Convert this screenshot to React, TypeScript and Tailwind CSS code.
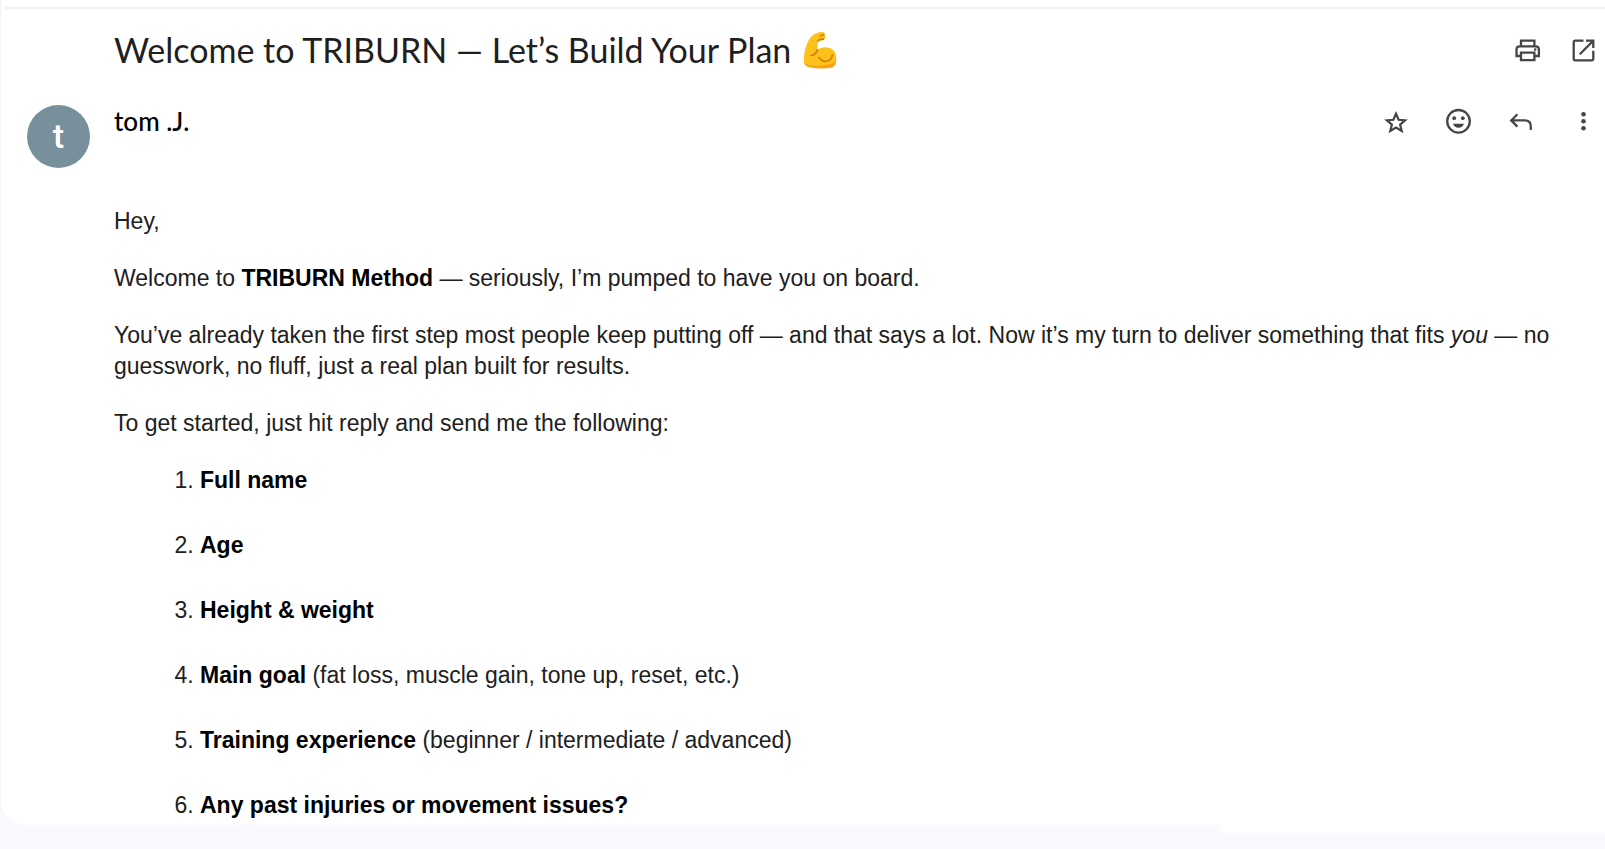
import React from "react";

type Question = { label: string; note?: string };

const questions: Question[] = [
  { label: "Full name" },
  { label: "Age" },
  { label: "Height & weight" },
  { label: "Main goal", note: "(fat loss, muscle gain, tone up, reset, etc.)" },
  { label: "Training experience", note: "(beginner / intermediate / advanced)" },
  { label: "Any past injuries or movement issues?" },
];

function IconButton({ label, children }: { label: string; children: React.ReactNode }) {
  return (
    <button type="button" aria-label={label} className="flex size-8 items-center justify-center rounded-full text-[#444746] hover:bg-gray-100">
      {children}
    </button>
  );
}

function PrintIcon() {
  return (
    <svg viewBox="0 0 32 32" className="size-8" fill="none" stroke="currentColor" strokeWidth="2.3">
      <path d="M9 12.300V6.700h13.400v5.600M9 22H4.500v-6.500q0-3.200 3.200-3.200h16q3.200 0 3.200 3.200V22h-4.500" />
      <path d="M9 18.600h13.400v7.600H9z" />
      <circle cx="23.200" cy="15.600" r="1.300" fill="currentColor" stroke="none" />
    </svg>
  );
}

function OpenIcon() {
  return (
    <svg viewBox="0 0 32 32" className="size-8" fill="none" stroke="currentColor" strokeWidth="2.3">
      <path d="M15.500 6.700H7.400q-1.700 0-1.700 1.700v16.200q0 1.700 1.700 1.700h16.200q1.700 0 1.700-1.700v-7.800" />
      <path d="M18 6.700h7.300V14M25 7L11.800 20.200" />
    </svg>
  );
}

function StarIcon() {
  return (
    <svg viewBox="0 0 32 32" className="size-8" fill="none" stroke="currentColor" strokeWidth="2.2">
      <path d="M17 8.800l2.600 6 6.500.5-5 4.300 1.600 6.400-5.700-3.400-5.700 3.400 1.600-6.400-5-4.300 6.500-.5z" />
    </svg>
  );
}

function SmileIcon() {
  return (
    <svg viewBox="0 0 32 32" className="size-8" fill="currentColor">
      <circle cx="16.500" cy="16.300" r="11.300" fill="none" stroke="currentColor" strokeWidth="2.300" />
      <circle cx="12.200" cy="13.200" r="1.900" />
      <circle cx="20.800" cy="13.200" r="1.900" />
      <path d="M11 18.800h11q-1.500 4-5.500 4t-5.500-4z" />
    </svg>
  );
}

function ReplyIcon() {
  return (
    <svg viewBox="0 0 32 32" className="size-8" fill="none" stroke="currentColor" strokeWidth="2.300">
      <path d="M12.400 9.200L6.200 15.400l6.200 6.200M6.200 15.400h13.600q6 0 6 6v3.500" />
    </svg>
  );
}

function MoreIcon() {
  return (
    <svg viewBox="0 0 32 32" className="size-8" fill="currentColor">
      <circle cx="15.500" cy="9.300" r="2.300" />
      <circle cx="15.500" cy="16.300" r="2.300" />
      <circle cx="15.500" cy="23.300" r="2.300" />
    </svg>
  );
}

function Biceps() {
  return (
    <svg viewBox="0 0 34 38" className="h-[38px] w-[34px] shrink-0" role="img" aria-label="Flexed biceps">
      <path d="M15 1.800Q19-.4 21.200 1.700l1.200 3q.5 3.400-2.600 4.500-2.400.9-4.600 1.300-1 4.600-.6 8.500 2.400-2.500 6.700-2.700 11.700.3 11.900 10.400.3 7.500-4.200 9.700-11 2.100-22.700-.2-5-1.200-5.500-5Q.5 15 8.400 5.300 11.500 2.500 15 1.800z" fill="#fcc21b" />
      <path d="M2 33q10 4 28-.4 2.500-1.600 3.100-5 .2 7-4.100 8.700-11 2.100-22.700-.2Q2.600 35.300 2 33z" fill="#f9a010" />
      <path d="M8 24.500q3.500.2 6.700-5.500M16 26.500q3.500 5 8.500 3.500 4.500-1.500 4.900-6.300M15 9.800q2-2.300 5.200-1.600M17 4.600q2.600.4 3.800-1.200" fill="none" stroke="#c8820e" strokeWidth="1.700" strokeLinecap="round" />
    </svg>
  );
}

export default function App() {
  return (
    <div className="flex min-h-screen flex-col bg-[#f8faff] font-['Liberation_Sans',Arial,sans-serif] text-[#202020]">
      <main className="rounded-bl-3xl border-l border-[#f4f5f8] bg-white pb-1">
        <div className="h-[7px]" />
        <div className="ml-1 h-0.5 bg-[#f1f1f2]" />
        <header className="flex items-center justify-between pt-4 pr-[5px] pl-[113px]">
          <h1 className="flex items-center gap-3 font-[Lato,sans-serif] text-[34px] leading-[50px] text-[#1f1f1f]">
            Welcome to TRIBURN — Let’s Build Your Plan
            <Biceps />
          </h1>
          <div className="flex gap-6">
            <IconButton label="Print all"><PrintIcon /></IconButton>
            <IconButton label="Open in new window"><OpenIcon /></IconButton>
          </div>
        </header>
        <section className="flex items-start pt-[30px] pr-[5px] pl-[26px]">
          <div className="flex size-[63px] shrink-0 items-center justify-center rounded-full bg-[#78909c] font-[Roboto,sans-serif] text-[34px] font-medium text-white">t</div>
          <div className="ml-6 flex grow items-center justify-between">
            <h2 className="font-[Lato,sans-serif] text-[26px] leading-8 font-medium text-black">tom .J.</h2>
            <div className="flex gap-[31px]">
              <IconButton label="Star"><StarIcon /></IconButton>
              <IconButton label="Add reaction"><SmileIcon /></IconButton>
              <IconButton label="Reply"><ReplyIcon /></IconButton>
              <IconButton label="More"><MoreIcon /></IconButton>
            </div>
          </div>
        </section>
        <article className="flex flex-col gap-[26px] pt-[38px] pr-10 pl-[113px] text-[23px] leading-[31px]">
          <p>Hey,</p>
          <p>Welcome to <strong className="text-black">TRIBURN Method</strong> — seriously, I’m pumped to have you on board.</p>
          <p>You’ve already taken the first step most people keep putting off — and that says a lot. Now it’s my turn to deliver something that fits <em>you</em> — no guesswork, no fluff, just a real plan built for results.</p>
          <p>To get started, just hit reply and send me the following:</p>
          <ol className="flex list-decimal flex-col gap-[34px] pl-[86px]">
            {questions.map((q) => (
              <li key={q.label}>
                <strong className="text-black">{q.label}</strong>
                {q.note && <> {q.note}</>}
              </li>
            ))}
          </ol>
        </article>
      </main>
      <div className="flex justify-end">
        <div className="h-2 w-[24%] bg-white" />
      </div>
    </div>
  );
}
